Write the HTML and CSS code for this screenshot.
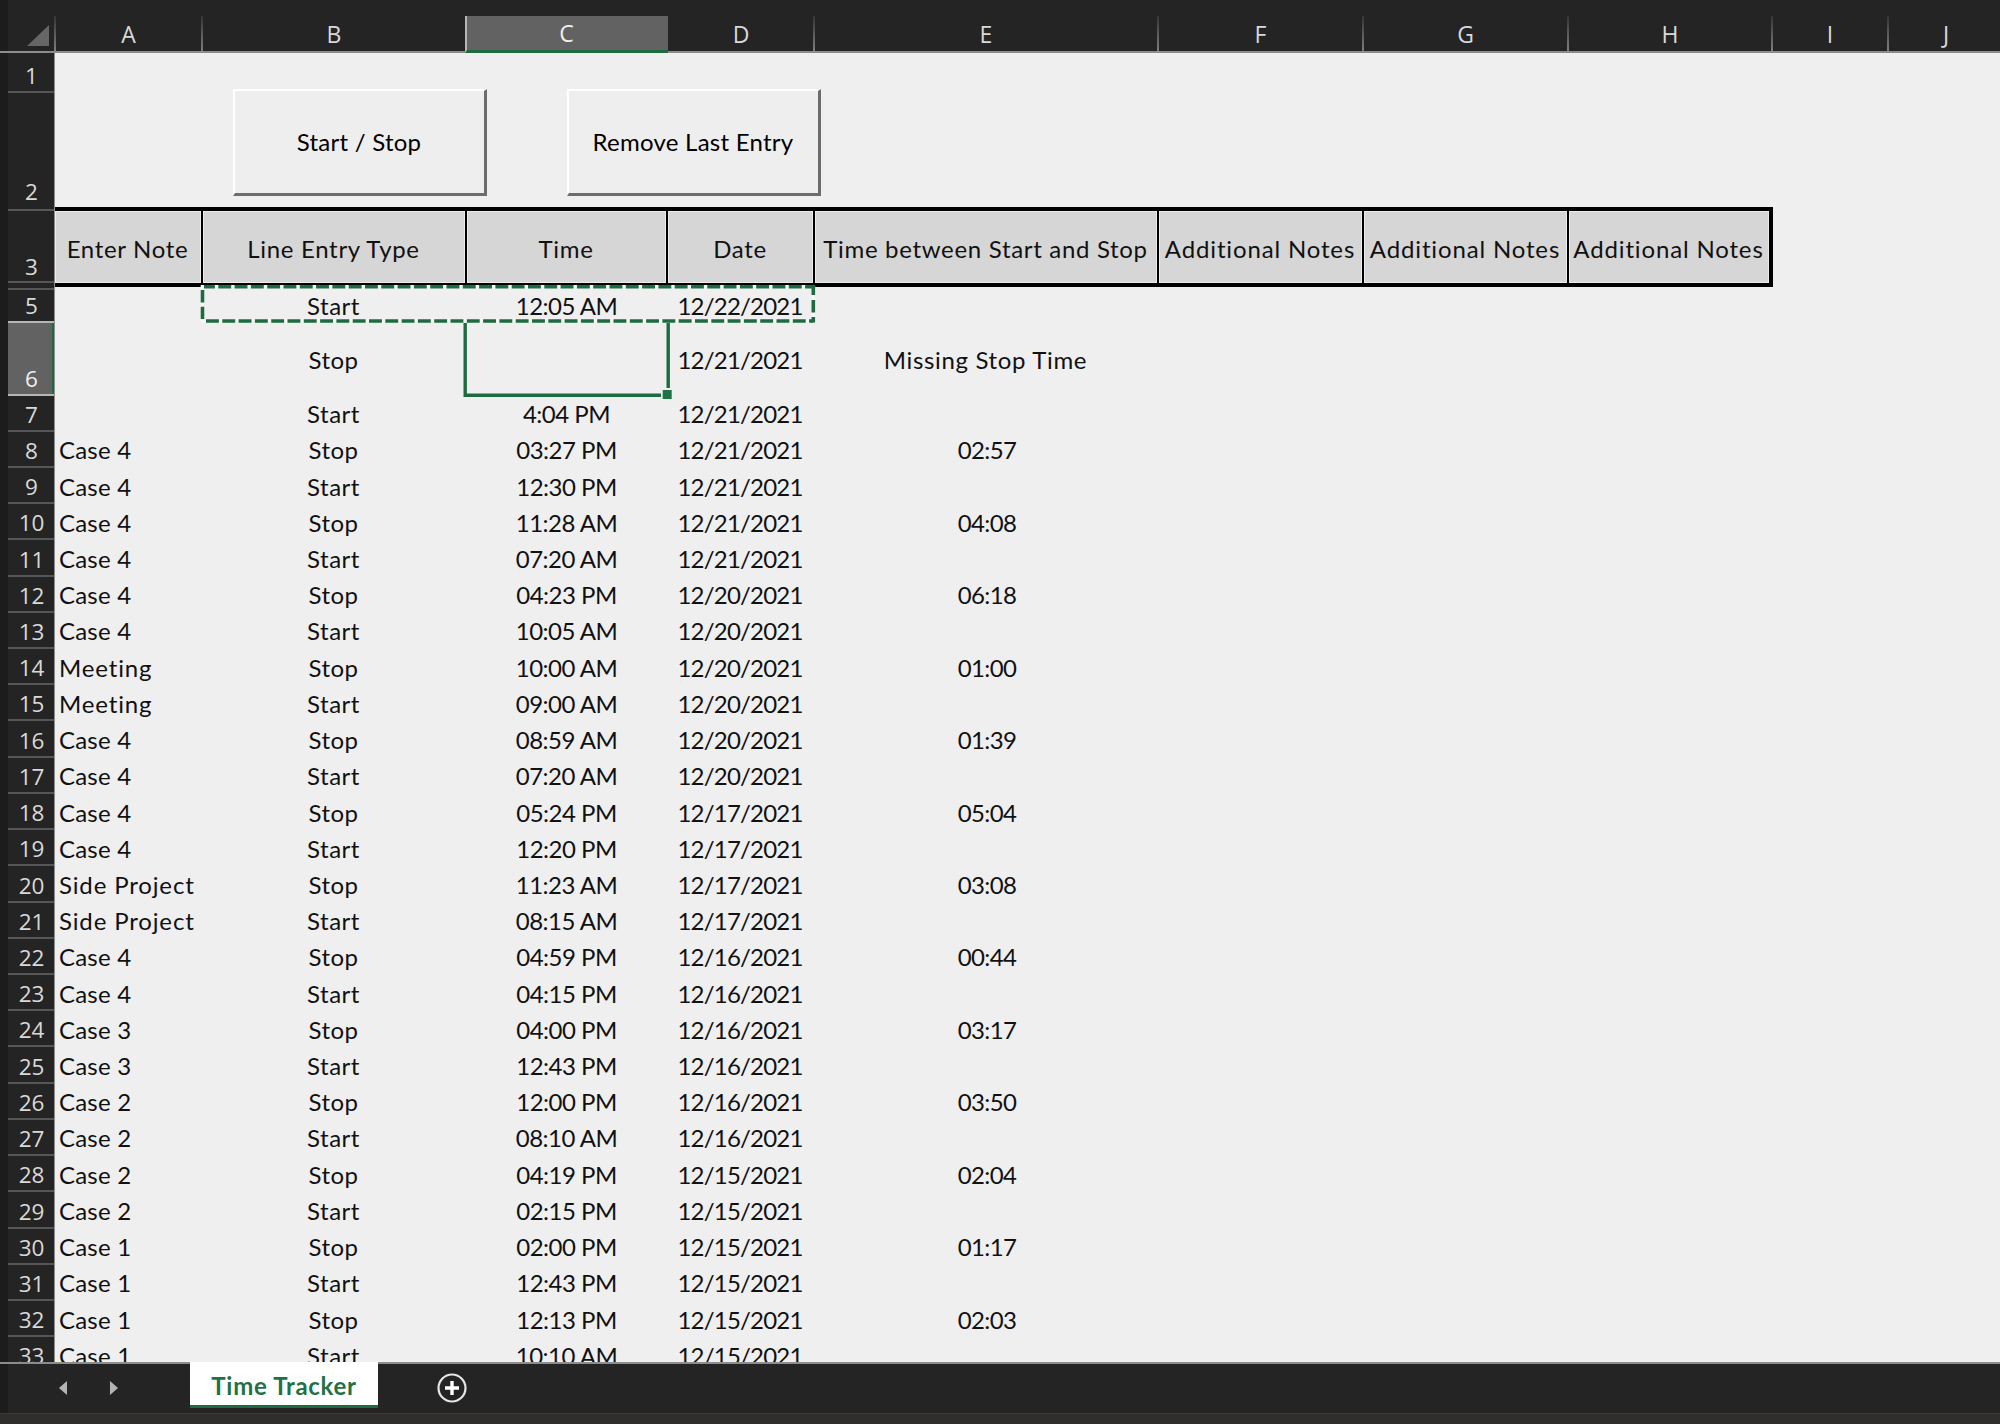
FILE: index.html
```html
<!DOCTYPE html>
<html lang="en">
<head>
    <meta charset="UTF-8">
    <meta name="viewport" content="width=device-width, initial-scale=1.0">
    <title>Time Tracker</title>
    <link rel="stylesheet" href="styles.css">
</head>
<body>
    <div class="window">
        <div class="col-headers">
            <div class="corner">
                <svg width="22" height="21" viewBox="0 0 22 21"><path d="M22 0V21H0Z" fill="#666"/></svg>
            </div>
            <div>A</div>
            <div>B</div>
            <div class="selected">C</div>
            <div>D</div>
            <div>E</div>
            <div>F</div>
            <div>G</div>
            <div>H</div>
            <div>I</div>
            <div>J</div>
        </div>

        <div class="sheet">
            <div class="row-headers" id="rowHeaders">
                <div class="r1">1</div>
                <div class="r2">2</div>
                <div class="r3">3</div>
                <div class="r4"></div>
                <div class="r5">5</div>
                <div class="r6 selected">6</div>
            </div>

            <div class="cells">
                <div class="toolbar">
                    <button type="button">Start / Stop</button>
                    <button type="button">Remove Last Entry</button>
                </div>

                <div class="row heading">
                    <div>Enter Note</div>
                    <div>Line Entry Type</div>
                    <div>Time</div>
                    <div>Date</div>
                    <div>Time between Start and Stop</div>
                    <div class="extra">Additional Notes</div>
                    <div class="extra">Additional Notes</div>
                    <div class="extra">Additional Notes</div>
                </div>

                <div id="entries"></div>

                <!-- copied range and active cell -->
                <svg class="overlay" width="640" height="120" viewBox="0 0 640 120">
                    <g fill="none" stroke-width="3.6">
                        <path d="M7 6.7H619M7 41H619M8.5 5V42.5M619.3 5V42.5" stroke="#f8f8f8"/>
                        <g stroke="#1f6b41">
                            <path d="M10 6.7H619" stroke-dasharray="12.9 3.4" stroke-dashoffset="2"/>
                            <path d="M12 41H619" stroke-dasharray="12.9 3.4"/>
                            <path d="M8.5 10V22.5M8.5 26.7V39"/>
                            <path d="M619.3 5V15M619.3 20V32.5M619.3 37V42.5"/>
                        </g>
                    </g>
                    <path d="M271.2 43V115.3H467M474.2 43V108" fill="none" stroke="#1f6b41" stroke-width="3.4"/>
                    <rect x="468.7" y="110" width="9" height="9" fill="#1f7246"/>
                </svg>
            </div>
        </div>

        <div class="tab-bar">
            <svg class="arrow" width="8" height="14" viewBox="0 0 8 14"><path d="M8 0V14L0 7Z" fill="#b4b4b4"/></svg>
            <svg class="arrow" width="8" height="14" viewBox="0 0 8 14"><path d="M0 0V14L8 7Z" fill="#b4b4b4"/></svg>
            <div class="tab">Time Tracker</div>
            <svg class="add" width="30" height="30" viewBox="0 0 30 30">
                <circle cx="15" cy="15" r="13.5" fill="none" stroke="#e6e6e6" stroke-width="2.2"/>
                <path d="M15 8V22M8 15H22" stroke="#fff" stroke-width="3.4"/>
            </svg>
        </div>
        <div class="status-bar"></div>
    </div>

    <script>
        // note, type, time, date, duration (first entry is sheet row 5)
        const entries = [
            ['', 'Start', '12:05 AM', '12/22/2021', ''],
            ['', 'Stop', '', '12/21/2021', 'Missing Stop Time'],
            ['', 'Start', '4:04 PM', '12/21/2021', ''],
            ['Case 4', 'Stop', '03:27 PM', '12/21/2021', '02:57'],
            ['Case 4', 'Start', '12:30 PM', '12/21/2021', ''],
            ['Case 4', 'Stop', '11:28 AM', '12/21/2021', '04:08'],
            ['Case 4', 'Start', '07:20 AM', '12/21/2021', ''],
            ['Case 4', 'Stop', '04:23 PM', '12/20/2021', '06:18'],
            ['Case 4', 'Start', '10:05 AM', '12/20/2021', ''],
            ['Meeting', 'Stop', '10:00 AM', '12/20/2021', '01:00'],
            ['Meeting', 'Start', '09:00 AM', '12/20/2021', ''],
            ['Case 4', 'Stop', '08:59 AM', '12/20/2021', '01:39'],
            ['Case 4', 'Start', '07:20 AM', '12/20/2021', ''],
            ['Case 4', 'Stop', '05:24 PM', '12/17/2021', '05:04'],
            ['Case 4', 'Start', '12:20 PM', '12/17/2021', ''],
            ['Side Project', 'Stop', '11:23 AM', '12/17/2021', '03:08'],
            ['Side Project', 'Start', '08:15 AM', '12/17/2021', ''],
            ['Case 4', 'Stop', '04:59 PM', '12/16/2021', '00:44'],
            ['Case 4', 'Start', '04:15 PM', '12/16/2021', ''],
            ['Case 3', 'Stop', '04:00 PM', '12/16/2021', '03:17'],
            ['Case 3', 'Start', '12:43 PM', '12/16/2021', ''],
            ['Case 2', 'Stop', '12:00 PM', '12/16/2021', '03:50'],
            ['Case 2', 'Start', '08:10 AM', '12/16/2021', ''],
            ['Case 2', 'Stop', '04:19 PM', '12/15/2021', '02:04'],
            ['Case 2', 'Start', '02:15 PM', '12/15/2021', ''],
            ['Case 1', 'Stop', '02:00 PM', '12/15/2021', '01:17'],
            ['Case 1', 'Start', '12:43 PM', '12/15/2021', ''],
            ['Case 1', 'Stop', '12:13 PM', '12/15/2021', '02:03'],
            ['Case 1', 'Start', '10:10 AM', '12/15/2021', '']
        ];
        const columns = ['note', 'type', 'time', 'date', 'duration'];

        const rowHeaders = document.getElementById('rowHeaders');
        const entriesDiv = document.getElementById('entries');

        entries.forEach((entry, i) => {
            const row = document.createElement('div');
            row.className = 'row entry';
            row.innerHTML = entry.map((text, c) => `<div class="${columns[c]}">${text}</div>`).join('');
            if (entry[0].startsWith('Case')) {
                row.firstChild.classList.add('case');
            }
            entriesDiv.appendChild(row);

            if (i > 1) {
                const header = document.createElement('div');
                header.textContent = i + 5;
                rowHeaders.appendChild(header);
            } else if (i === 1) {
                row.lastChild.classList.add('message');
            }
        });
    </script>
</body>
</html>
```
FILE: styles.css
```css
* {
    box-sizing: border-box;
}
body {
    margin: 0;
    background-color: #242424;
    font-family: Lato, "Liberation Sans", sans-serif;
    font-size: 24px;
    color: #111;
}
.window {
    width: 2000px;
    height: 1424px;
    overflow: hidden;
    display: flex;
    flex-direction: column;
    background: linear-gradient(to right, #1c1c1c 8px, #242424 8px);
}
.col-headers {
    display: grid;
    grid-template-columns: 48px 147px 264px 202px 146px 344px 205px 205px 204px 116px 116px;
    height: 53px;
    padding: 16px 0 0 8px;
    flex-shrink: 0;
    font-family: "Open Sans", "Noto Sans", sans-serif;
    font-size: 23px;
    color: #d9d9d9;
    border-bottom: 2px solid #8c8c8c;
}
.col-headers div {
    display: flex;
    align-items: center;
    justify-content: center;
    border-right: 2px solid;
    border-image: linear-gradient(#333, #808080) 1;
}
.col-headers .corner {
    align-items: flex-start;
    justify-content: flex-end;
    padding: 9px 5px 0 0;
}
.col-headers .selected {
    margin: 0 1px -2px -2px;
    padding-right: 2px;
    background-color: #626262;
    border: none;
    border-left: 2px solid #b5b5b5;
    border-bottom: 3px solid #1f6b41;
    color: #f0f0f0;
}
.sheet {
    display: flex;
    height: 1311px;
    padding-left: 8px;
    overflow: hidden;
    flex-shrink: 0;
    border-bottom: 2px solid #8c8c8c;
}
.row-headers {
    width: 47px;
    flex-shrink: 0;
    font-family: "Open Sans", "Noto Sans", sans-serif;
    font-size: 22.5px;
    color: #d9d9d9;
    border-right: 1px solid #8c8c8c;
}
.row-headers div {
    height: 36.22px;
    display: flex;
    align-items: flex-end;
    justify-content: center;
    padding-left: 1px;
    line-height: 31px;
    border-bottom: 2px solid #565656;
}
.row-headers .r1 {
    height: 39.5px;
}
.row-headers .r2 {
    height: 118px;
    line-height: 35px;
}
.row-headers .r3 {
    height: 72px;
    line-height: 28px;
}
.row-headers .r4 {
    height: 7px;
}
.row-headers .r5 {
    height: 33px;
}
.row-headers .r6 {
    height: 73px;
}
.row-headers .selected {
    background-color: #626262;
    border-bottom-color: #b5b5b5;
    box-shadow: 0 -2px 0 #b5b5b5, inset -2px 0 0 #1f6b41;
    color: #f0f0f0;
}
.cells {
    position: relative;
    flex: 1;
    background-color: #efefef;
}
.toolbar {
    display: flex;
    gap: 80px;
    height: 154px;
    padding: 36px 0 0 178px;
}
button {
    width: 254px;
    height: 107px;
    padding: 0 1px 2px 0;
    font: inherit;
    letter-spacing: 0.25px;
    color: #000;
    background-color: #eee;
    border: 2px solid #fff;
    border-right: 3px solid #6c6c6c;
    border-bottom: 3px solid #6c6c6c;
}
.row {
    display: grid;
    grid-template-columns: 148px 264px 201px 147px 344px 205px 205px 200px;
    width: 1718px;
}
.row div {
    display: flex;
    align-items: center;
    justify-content: center;
    white-space: nowrap;
}
.heading {
    height: 80px;
    background-color: #d6d6d6;
    border: 4px solid #000;
    border-left: none;
    letter-spacing: 0.68px;
}
.heading div {
    padding: 2px 1px 0 0;
    border-right: 2px solid #000;
    box-shadow: inset 0 0 0 1px #ececec;
}
.heading .extra {
    letter-spacing: 0.85px;
}
.heading div:last-child {
    border-right: none;
}
.entry {
    height: 36.22px;
    padding-top: 1px;
}
.entry:first-child {
    height: 35px;
}
.entry:nth-child(2) {
    height: 73px;
}
.entry .note {
    justify-content: flex-start;
    padding-left: 4px;
    letter-spacing: 0.85px;
}
.entry .case {
    letter-spacing: 0.2px;
}
.entry .type {
    padding-right: 3px;
    letter-spacing: 0.5px;
}
.entry .time {
    padding-right: 2px;
    letter-spacing: -0.5px;
}
.entry .date {
    padding-right: 3px;
    letter-spacing: -0.8px;
}
.entry .duration {
    letter-spacing: -0.6px;
}
.entry .message {
    padding-right: 3px;
    letter-spacing: 0.65px;
}
.overlay {
    position: absolute;
    left: 139px;
    top: 227px;
}
.tab-bar {
    display: flex;
    align-items: flex-start;
    height: 49px;
    padding-left: 59px;
    flex-shrink: 0;
}
.arrow {
    margin: 17px 43px 0 0;
}
.tab {
    position: relative;
    width: 188px;
    height: 46px;
    margin: -2px 59px 0 29px;
    line-height: 48px;
    text-align: center;
    font-weight: bold;
    letter-spacing: 0.7px;
    color: #1f7246;
    background-color: #fff;
    border-bottom: 3px solid #1f6b41;
}
.add {
    margin-top: 9px;
}
.status-bar {
    flex: 1;
    background-color: #2f2e2c;
    border-top: 1px solid #3b3a38;
}
```
